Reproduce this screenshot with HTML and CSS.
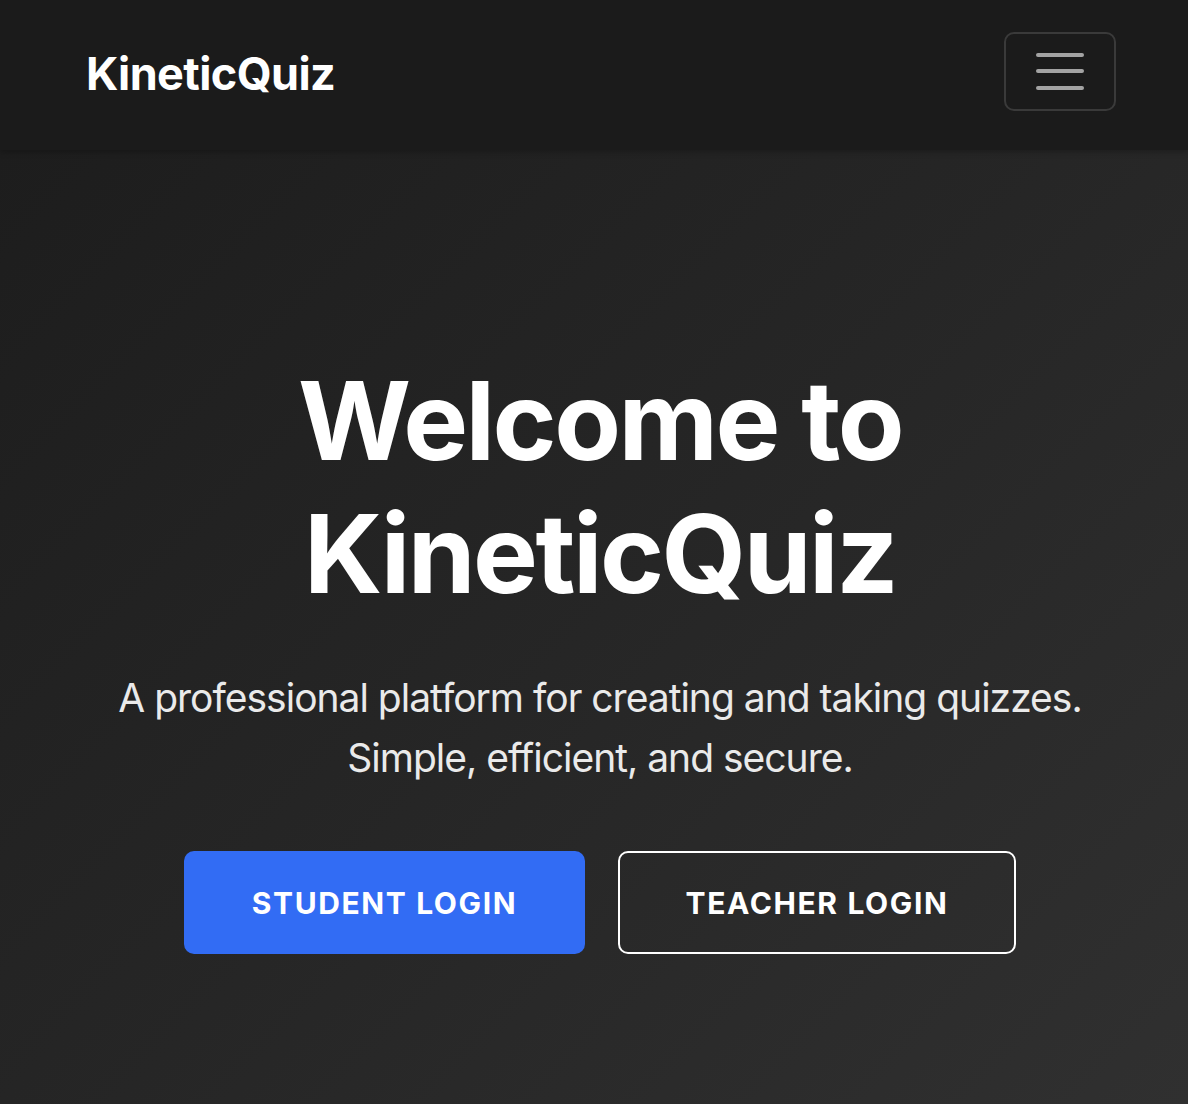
FILE: index.html
```html
<!DOCTYPE html>
<html lang="en">
<head>
<meta charset="utf-8">
<title>KineticQuiz</title>
<link rel="stylesheet" href="styles.css">
</head>
<body>
<header class="navbar">
  <a class="brand" href="#">KineticQuiz</a>
  <button class="menu-toggle" type="button" aria-label="Toggle navigation">
    <span class="bar"></span>
    <span class="bar"></span>
    <span class="bar"></span>
  </button>
</header>
<main class="hero">
  <h1 class="hero-title">Welcome to KineticQuiz</h1>
  <p class="hero-lead">A professional platform for creating and taking quizzes. Simple, efficient, and secure.</p>
  <div class="hero-actions">
    <a class="btn btn-primary" href="#">Student Login</a>
    <a class="btn btn-outline" href="#">Teacher Login</a>
  </div>
</main>
</body>
</html>
```

FILE: styles.css
```css
* { box-sizing: border-box; }

html, body {
  margin: 0;
  height: 100%;
}

body {
  font-family: Inter, "Noto Sans", sans-serif;
  background: #1b1b1b;
  color: #fff;
  display: flex;
  flex-direction: column;
}

.navbar {
  height: 150px;
  background: #1b1b1b;
  display: flex;
  align-items: center;
  justify-content: space-between;
  padding: 0 72px 8px 86px;
  box-shadow: 0 2px 6px rgba(0, 0, 0, 0.25);
  position: relative;
  z-index: 1;
}

.brand {
  color: #fff;
  text-decoration: none;
  font-weight: 700;
  font-size: 45px;
  letter-spacing: -0.6px;
  margin-top: 4px;
}

.menu-toggle {
  width: 112px;
  height: 79px;
  border: 2px solid #3a3a3a;
  border-radius: 10px;
  background: transparent;
  display: flex;
  flex-direction: column;
  align-items: center;
  justify-content: center;
  gap: 12.5px;
  padding: 0;
}

.menu-toggle .bar {
  display: block;
  width: 48px;
  height: 4px;
  border-radius: 2px;
  background: #a3a3a3;
}

.hero {
  flex: 1;
  background: linear-gradient(135deg, #1d1d1d 0%, #262626 50%, #303030 100%);
  display: flex;
  flex-direction: column;
  align-items: center;
  text-align: center;
  padding: 204px 48px 0 60px;
}

.hero-title {
  margin: 0;
  font-size: 109px;
  line-height: 133px;
  font-weight: 700;
  letter-spacing: -2.5px;
  max-width: 700px;
}

.hero-lead {
  margin: 48px 0 0;
  font-size: 39px;
  line-height: 60px;
  color: #eaeaea;
  letter-spacing: -1px;
}

.hero-actions {
  margin-top: 63px;
  display: flex;
  gap: 33px;
}

.btn {
  display: flex;
  align-items: center;
  justify-content: center;
  height: 103px;
  border-radius: 10px;
  color: #fff;
  text-decoration: none;
  text-transform: uppercase;
  font-weight: 700;
  font-size: 30px;
  letter-spacing: 1.6px;
}

.btn-primary {
  width: 401px;
  background: #326cf4;
}

.btn-outline {
  width: 398px;
  border: 2px solid #fff;
}
```
